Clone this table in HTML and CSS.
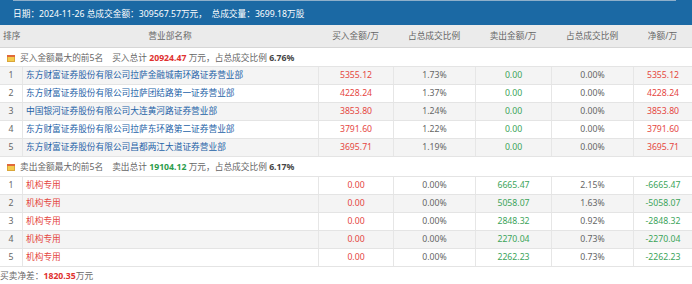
FILE: index.html
```html
<!DOCTYPE html>
<html lang="zh-CN">
<head>
<meta charset="utf-8">
<title>龙虎榜</title>
<link rel="stylesheet" href="styles.css">
</head>
<body>
<div class="topbar"><div class="topbar-inner">日期：2024-11-26 总成交金额：309567.57万元，&nbsp; 总成交量：3699.18万股</div></div>
<div class="table">
  <div class="row head">
    <div class="c rank">排序</div>
    <div class="c">营业部名称</div>
    <div class="c">买入金额/万</div>
    <div class="c">占总成交比例</div>
    <div class="c">卖出金额/万</div>
    <div class="c">占总成交比例</div>
    <div class="c">净额/万</div>
  </div>
  <div class="section">
    <svg class="ico" width="8" height="8" viewBox="0 0 8 8"><rect x="0.5" y="1.5" width="7" height="6" fill="#f4cb4c" stroke="#d9a63a" stroke-width="1"/><rect x="0" y="1" width="8" height="2" fill="#e0693a"/></svg>
    <span>买入金额最大的前5名</span><span class="gap">买入总计 <b class="red">20924.47</b> 万元，占总成交比例 <b class="dark">6.76%</b></span>
  </div>
  <div class="row data odd"><div class="c">1</div><div class="c name">东方财富证券股份有限公司拉萨金融城南环路证券营业部</div><div class="c red">5355.12</div><div class="c">1.73%</div><div class="c green">0.00</div><div class="c">0.00%</div><div class="c red">5355.12</div></div>
  <div class="row data"><div class="c">2</div><div class="c name">东方财富证券股份有限公司拉萨团结路第一证券营业部</div><div class="c red">4228.24</div><div class="c">1.37%</div><div class="c green">0.00</div><div class="c">0.00%</div><div class="c red">4228.24</div></div>
  <div class="row data odd"><div class="c">3</div><div class="c name">中国银河证券股份有限公司大连黄河路证券营业部</div><div class="c red">3853.80</div><div class="c">1.24%</div><div class="c green">0.00</div><div class="c">0.00%</div><div class="c red">3853.80</div></div>
  <div class="row data"><div class="c">4</div><div class="c name">东方财富证券股份有限公司拉萨东环路第二证券营业部</div><div class="c red">3791.60</div><div class="c">1.22%</div><div class="c green">0.00</div><div class="c">0.00%</div><div class="c red">3791.60</div></div>
  <div class="row data odd"><div class="c">5</div><div class="c name">东方财富证券股份有限公司昌都两江大道证券营业部</div><div class="c red">3695.71</div><div class="c">1.19%</div><div class="c green">0.00</div><div class="c">0.00%</div><div class="c red">3695.71</div></div>
  <div class="section second">
    <svg class="ico" width="8" height="8" viewBox="0 0 8 8"><rect x="0.5" y="1.5" width="7" height="6" fill="#f4cb4c" stroke="#d9a63a" stroke-width="1"/><rect x="0" y="1" width="8" height="2" fill="#e0693a"/></svg>
    <span>卖出金额最大的前5名</span><span class="gap">卖出总计 <b class="green">19104.12</b> 万元，占总成交比例 <b class="dark">6.17%</b></span>
  </div>
  <div class="row data"><div class="c">1</div><div class="c name red">机构专用</div><div class="c red">0.00</div><div class="c">0.00%</div><div class="c green">6665.47</div><div class="c">2.15%</div><div class="c green">-6665.47</div></div>
  <div class="row data odd"><div class="c">2</div><div class="c name red">机构专用</div><div class="c red">0.00</div><div class="c">0.00%</div><div class="c green">5058.07</div><div class="c">1.63%</div><div class="c green">-5058.07</div></div>
  <div class="row data"><div class="c">3</div><div class="c name red">机构专用</div><div class="c red">0.00</div><div class="c">0.00%</div><div class="c green">2848.32</div><div class="c">0.92%</div><div class="c green">-2848.32</div></div>
  <div class="row data odd"><div class="c">4</div><div class="c name red">机构专用</div><div class="c red">0.00</div><div class="c">0.00%</div><div class="c green">2270.04</div><div class="c">0.73%</div><div class="c green">-2270.04</div></div>
  <div class="row data last"><div class="c">5</div><div class="c name red">机构专用</div><div class="c red">0.00</div><div class="c">0.00%</div><div class="c green">2262.23</div><div class="c">0.73%</div><div class="c green">-2262.23</div></div>
</div>
<div class="footer">买卖净差：<b class="red">1820.35</b>万元</div>
</body>
</html>
```
FILE: styles.css
```css
html, body {
  margin: 0;
  padding: 0;
  background: #fff;
}
body {
  width: 692px;
  font-family: "Noto Sans", "Noto Sans CJK SC", sans-serif;
  font-size: 8.7px;
  color: #666;
  overflow: hidden;
}
.topbar {
  background: #1b69a4;
  height: 25px;
  padding: 0 16px 0 13px;
  box-sizing: border-box;
}
.topbar-inner {
  border-top: 1px solid #8eafca;
  height: 24px;
  line-height: 26px;
  color: #fff;
  white-space: nowrap;
}
.table {
  width: 692px;
}
.row {
  display: grid;
  grid-template-columns: 22px 296px 75px 82px 76px 82px 59px;
  box-sizing: border-box;
}
.row .c {
  text-align: center;
  white-space: nowrap;
  overflow: hidden;
}
.head {
  height: 23px;
  background: #ebebeb;
  border-bottom: 1px solid #d6d6d6;
  line-height: 23px;
  color: #666;
}
.head .rank {
  text-align: left;
  padding-left: 3px;
}
.data {
  height: 18px;
  border-top: 1px solid #e4e4e4;
  line-height: 17px;
  color: #666;
}
.data.odd {
  background: #f4f4f4;
}
.data.last {
  height: 19px;
  border-bottom: 1px solid #e4e4e4;
}
.data .c + .c {
  border-left: 1px solid #e6e6e6;
}
.data .name {
  text-align: left;
  padding-left: 3px;
  color: #2462a7;
}
.data .name.red {
  color: #e5473f;
}
.section {
  height: 18px;
  display: flex;
  align-items: center;
  padding-left: 7px;
  color: #666;
  white-space: nowrap;
}
.section.second {
  height: 19px;
  border-top: 1px solid #e4e4e4;
}
.ico {
  width: 8px;
  height: 8px;
  margin-right: 5px;
  margin-top: 1px;
  flex: none;
}
.gap {
  margin-left: 9px;
}
.red {
  color: #e5473f;
}
.green {
  color: #3ca45a;
}
b.red {
  color: #e0312f;
}
b.green {
  color: #2c9d4c;
}
b.dark {
  color: #444;
}
.footer {
  height: 18px;
  line-height: 18px;
  color: #666;
  white-space: nowrap;
}
```
